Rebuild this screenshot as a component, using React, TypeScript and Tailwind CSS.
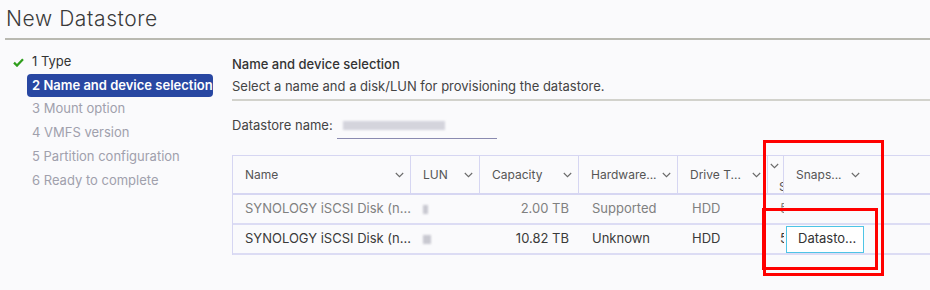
import React from "react";

const Chevron = ({ className = "" }: { className?: string }) => (
  <svg width="9" height="6" viewBox="0 0 9 6" className={className}>
    <path d="M0.8 1 L4.5 4.7 L8.2 1" fill="none" stroke="#6a6a6a" strokeWidth="1.1" />
  </svg>
);

const Check = () => (
  <svg width="11" height="9" viewBox="0 0 11 9">
    <path d="M1 4.6 L4 7.6 L10 1.2" fill="none" stroke="#2f9e1c" strokeWidth="2.2" />
  </svg>
);

const cols = [
  { label: "Name", w: "w-[178px]", chev: "mr-[6px]" },
  { label: "LUN", w: "w-[69px]", chev: "mr-[6px]" },
  { label: "Capacity", w: "w-[99px]", chev: "mr-[6px]" },
  { label: "Hardware...", w: "w-[99px]", chev: "mr-[6px]" },
  { label: "Drive T...", w: "w-[90px]", chev: "mr-[6px]" },
];

const Blur = ({ w, c = "bg-[#d4d4dc]" }: { w: string; c?: string }) => (
  <span className={`inline-block h-[9px] ${w} ${c} blur-[1px] align-middle`} />
);

export default function App() {
  const font = { fontFamily: "Inter, 'Open Sans', sans-serif" };
  return (
    <div
      className="relative w-[930px] h-[290px] overflow-hidden bg-[#fafafc] text-[#333]"
      style={font}
    >
      <div className="ml-[5px] h-[40px] border-b-2 border-[#b9b9b1] pl-[1px] pt-[6px]">
        <div className="text-[21px] leading-[26px] font-light tracking-[0.6px] text-[#3a3a3a]">
          New Datastore
        </div>
      </div>
      <div className="flex">
        <div className="w-[232px] shrink-0 pt-[10px] text-[13px]">
          <div className="flex h-[24px] items-center pl-[13px]">
            <Check />
            <span className="ml-[8px] text-[#333]">1 Type</span>
          </div>
          <div className="ml-[27px] flex h-[23px] w-[186px] items-center overflow-hidden whitespace-nowrap rounded-[4px] bg-[#2847a2] pl-[5px] font-semibold text-white">
            2 Name and device selection
          </div>
          {["3 Mount option", "4 VMFS version", "5 Partition configuration", "6 Ready to complete"].map(
            (t) => (
              <div key={t} className="flex h-[24px] items-center pl-[32px] text-[#a0a0ac]">
                {t}
              </div>
            )
          )}
        </div>
        <div className="flex-1">
          <div className="pt-[15px] text-[13px] leading-[18px] font-medium text-[#333]">
            Name and device selection
          </div>
          <div className="mt-[4px] border-b-2 border-[#d2d2cc] pb-[4px] text-[13px] leading-[18px] text-[#444]">
            Select a name and a disk/LUN for provisioning the datastore.
          </div>
          <div className="mt-[12px] flex h-[26px] items-center text-[13px] text-[#444]">
            <span>Datastore name:</span>
            <div className="ml-[4px] flex h-[26px] w-[160px] items-center border-b border-[#8a8ab0] pl-[6px]">
              <Blur w="w-[102px]" />
            </div>
          </div>
          <div className="mt-[16px] border-l border-t border-[#d6d6f2]">
            <div className="flex h-[39px] border-b-2 border-[#d6d6f2] text-[12px] text-[#555]">
              {cols.map((c) => (
                <div
                  key={c.label}
                  className={`${c.w} flex shrink-0 items-center justify-between border-r border-[#d6d6f2] pl-[12px]`}
                >
                  <span>{c.label}</span>
                  <Chevron className={c.chev} />
                </div>
              ))}
              <div className="relative w-[16px] shrink-0 overflow-hidden border-r border-[#d6d6f2]">
                <Chevron className="absolute left-[2px] top-[7px]" />
                <span className="absolute left-[11px] top-[22px]">S</span>
              </div>
              <div className="flex w-[150px] shrink-0 items-center pl-[12px]">
                <span>Snaps...</span>
                <Chevron className="ml-[9px]" />
              </div>
            </div>
            {[
              { name: "SYNOLOGY iSCSI Disk (n...", cap: "2.00 TB", hw: "Supported", lun: "w-[5px]", color: "text-[#808080]" },
              { name: "SYNOLOGY iSCSI Disk (n...", cap: "10.82 TB", hw: "Unknown", lun: "w-[8px]", color: "text-[#3a3a3a]" },
            ].map((r, i) => (
              <div
                key={i}
                className={`flex h-[30px] items-center border-b-2 border-[#dcdcf4] text-[13px] ${r.color}`}
              >
                <div className="w-[178px] shrink-0 overflow-hidden whitespace-nowrap pl-[12px]">{r.name}</div>
                <div className="w-[69px] shrink-0 pl-[12px]">
                  <Blur w={r.lun} c="bg-[#c8c8d0]" />
                </div>
                <div className="w-[99px] shrink-0 pr-[10px] text-right">{r.cap}</div>
                <div className="w-[99px] shrink-0 pl-[13px]">{r.hw}</div>
                <div className="w-[90px] shrink-0 pl-[14px]">HDD</div>
                <div className="w-[16px] shrink-0 overflow-hidden pl-[12px]">5</div>
                {i === 1 && (
                  <div className="ml-[2px] flex h-[27px] w-[78px] items-center border border-[#4ec4e6] bg-white pl-[11px] text-[#333]">
                    Datasto...
                  </div>
                )}
              </div>
            ))}
          </div>
        </div>
      </div>
      <div className="absolute left-[763px] top-[140px] h-[136px] w-[121px] border-[3px] border-[#ff0000]" />
      <div className="absolute left-[762px] top-[208px] h-[62px] w-[116px] border-[3px] border-[#ff0000]" />
    </div>
  );
}
